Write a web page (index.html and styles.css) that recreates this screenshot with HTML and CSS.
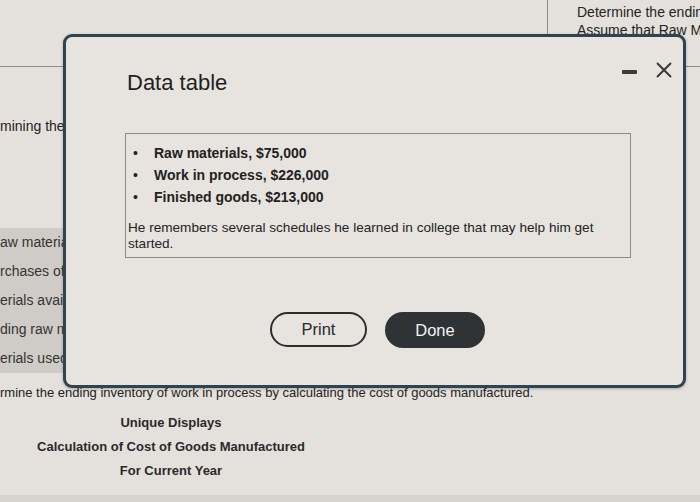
FILE: index.html
```html
<!DOCTYPE html>
<html lang="en">
<head>
<meta charset="utf-8">
<title>Data table</title>
<link rel="stylesheet" href="styles.css">
</head>
<body>
<div class="page">
  <div class="top">
    <div class="top-spacer"></div>
    <div class="top-text">
      <p>Determine the endin</p>
      <p>Assume that Raw M</p>
    </div>
  </div>
  <p class="intro">mining the ending inventory</p>
  <div class="rows">
    <div class="row">aw materials</div>
    <div class="row">rchases of direct materials</div>
    <div class="row">erials available</div>
    <div class="row">ding raw materials</div>
    <div class="row">erials used</div>
  </div>
  <p class="instruction">rmine the ending inventory of work in process by calculating the cost of goods manufactured.</p>
  <div class="headings">
    <p>Unique Displays</p>
    <p>Calculation of Cost of Goods Manufactured</p>
    <p>For Current Year</p>
  </div>
  <div class="bottom-band"></div>
</div>

<div class="modal">
  <div class="modal-header">
    <h1 class="modal-title">Data table</h1>
    <div class="controls">
      <span class="minimize"></span>
      <svg class="close" width="16" height="16" viewBox="0 0 16 16"><path d="M1.5 1.5 L14.5 14.5 M14.5 1.5 L1.5 14.5" stroke="#333" stroke-width="1.8" fill="none" stroke-linecap="round"/></svg>
    </div>
  </div>
  <div class="data-box">
    <ul class="bullets">
      <li><span class="dot">•</span>Raw materials, $75,000</li>
      <li><span class="dot">•</span>Work in process, $226,000</li>
      <li><span class="dot">•</span>Finished goods, $213,000</li>
    </ul>
    <p class="note">He remembers several schedules he learned in college that may help him get started.</p>
  </div>
  <div class="buttons">
    <button class="btn btn-print">Print</button>
    <button class="btn btn-done">Done</button>
  </div>
</div>
</body>
</html>
```
FILE: styles.css
```css
* { box-sizing: border-box; }
html, body {
  margin: 0;
  padding: 0;
  width: 700px;
  height: 502px;
  overflow: hidden;
  background: #e4e1dc;
  font-family: "Liberation Sans", Arial, sans-serif;
  color: #232323;
}
p { margin: 0; }
.page {
  display: flex;
  flex-direction: column;
  height: 502px;
  white-space: nowrap;
}
.top {
  display: flex;
  height: 67px;
  border-bottom: 1px solid #8f8d89;
}
.top-spacer {
  width: 548px;
  flex: none;
  border-right: 1px solid #8f8d89;
}
.top-text {
  padding: 3px 0 0 29px;
  font-size: 14px;
  line-height: 18px;
  overflow: hidden;
}
.intro {
  margin-top: 51px;
  font-size: 14px;
  line-height: 16px;
}
.rows {
  margin-top: 94px;
  width: 110px;
  background: #cfccc8;
  overflow: hidden;
}
.row {
  height: 29px;
  line-height: 29px;
  font-size: 14px;
  color: #333;
}
.instruction {
  margin-top: 12px;
  font-size: 13px;
  line-height: 16px;
}
.headings {
  margin-top: 10px;
  width: 342px;
  text-align: center;
  font-size: 13px;
  font-weight: bold;
  line-height: 24px;
  color: #2a2a2a;
}
.bottom-band {
  margin-top: 12px;
  flex: 1;
  background: #d7d3cd;
}

.modal {
  position: absolute;
  left: 63px;
  top: 34px;
  width: 623px;
  height: 354px;
  border: 3px solid #2f4451;
  border-radius: 9px;
  background: #e7e4df;
  box-shadow: 0 1px 3px rgba(0,0,0,0.25);
  display: flex;
  flex-direction: column;
}
.modal-header {
  display: flex;
  align-items: flex-start;
  padding: 25px 11px 0 61px;
}
.modal-title {
  flex: 1;
  margin: 8px 0 0;
  font-size: 22px;
  line-height: 26px;
  font-weight: normal;
  color: #1f1f1f;
}
.controls {
  display: flex;
  align-items: center;
  gap: 19px;
  height: 16px;
}
.minimize {
  width: 15px;
  height: 4px;
  background: #3a3a3a;
  border-radius: 1px;
  margin-top: 3px;
}
.close { display: block; }

.data-box {
  margin: 37px 52px 0 59px;
  border: 1px solid #8d8b87;
  padding: 8px 5px 5px 2px;
}
.bullets {
  list-style: none;
  margin: 0;
  padding: 0 0 0 5px;
  font-size: 14px;
  font-weight: bold;
  line-height: 22px;
  color: #222;
}
.bullets li { display: flex; }
.dot {
  width: 21px;
  flex: none;
  font-weight: normal;
}
.note {
  margin-top: 12px;
  max-width: 470px;
  white-space: normal;
  font-size: 13.6px;
  line-height: 16px;
  color: #232323;
}
.buttons {
  display: flex;
  justify-content: center;
  gap: 18px;
  margin-top: 54px;
  padding-left: 6px;
}
.btn {
  width: 97px;
  height: 35px;
  border-radius: 18px;
  font-family: "Liberation Sans", Arial, sans-serif;
  font-size: 16.5px;
  padding: 0;
}
.btn-print {
  border: 2px solid #2e2e2e;
  background: transparent;
  color: #2a2a2a;
}
.btn-done {
  border: none;
  background: #2f3336;
  color: #f3f3f3;
  width: 100px;
  height: 36px;
}
```
